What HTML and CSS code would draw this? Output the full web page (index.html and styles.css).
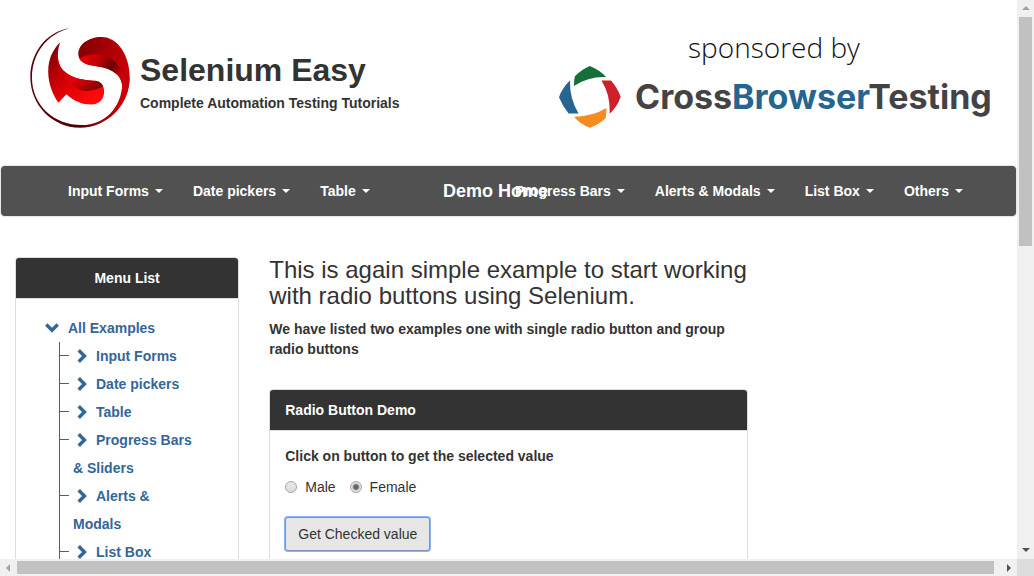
FILE: index.html
```html
<!DOCTYPE html>
<html lang="en">
<head>
<meta charset="utf-8">
<title>Selenium Easy - Radio Button Demo</title>
<link rel="stylesheet" href="styles.css">
</head>
<body>
<div class="viewport">
  <div class="page">
    <header class="site-header">
      <a class="brand" href="#">
        <svg class="brand-logo" viewBox="14 24 302 302" aria-hidden="true">
          <defs>
            <linearGradient id="ring" x1="0" y1="0" x2="1" y2="0">
              <stop offset="0" stop-color="#5a0508"/>
              <stop offset=".45" stop-color="#4a0003"/>
              <stop offset=".75" stop-color="#a00005"/>
              <stop offset="1" stop-color="#d00006"/>
            </linearGradient>
            <linearGradient id="lobe" x1="0" y1="0" x2="1" y2=".5">
              <stop offset="0" stop-color="#7a0003"/>
              <stop offset=".5" stop-color="#a80004"/>
              <stop offset="1" stop-color="#cc0006"/>
            </linearGradient>
            <linearGradient id="fold" x1="0" y1="0" x2="1" y2=".5">
              <stop offset="0" stop-color="#f00008"/>
              <stop offset=".4" stop-color="#c40005"/>
              <stop offset=".75" stop-color="#6c0003"/>
              <stop offset="1" stop-color="#c80006"/>
            </linearGradient>
            <linearGradient id="tail" x1="0" y1="0" x2=".7" y2="1">
              <stop offset="0" stop-color="#6c0003"/>
              <stop offset=".6" stop-color="#d80006"/>
              <stop offset="1" stop-color="#ff0a0a"/>
            </linearGradient>
            <linearGradient id="under" x1="0" y1="0" x2="1" y2="1">
              <stop offset="0" stop-color="#a00004"/>
              <stop offset=".55" stop-color="#e40007"/>
              <stop offset="1" stop-color="#6c0003"/>
            </linearGradient>
          </defs>
          <path fill="url(#ring)" d="M134 25C65 34 15 98 15 172c0 85 67 153 150 153s150-68 150-153l-22 20c-3 72-53 125-122 125C84 317 20 255 20 174 20 101 66 42 134 25z"/>
          <path fill="url(#lobe)" d="M160 105c-2-29 28-54 70-54 50 0 85 57 85 121 0 44-18 84-48 109 16-24 27-54 26-80-1-40-35-55-82-62-34-5-49-15-51-34z"/>
          <path fill="url(#fold)" d="M163 116c23-13 57-17 88-3 31 14 48 42 42 88-4-40-37-55-82-62-28-4-42-11-48-23z"/>
          <path fill="url(#tail)" d="M105 67c-20 20-36 48-36 88 0 38 14 70 31 95l24-26c24 22 48 31 75 31 25 0 39-17 39-40 0-20-12-31-32-32-48-2-96-17-106-58-4-18-2-38 5-58z"/>
          <path fill="url(#under)" d="M93 91c-4 42 13 80 51 108 29 22 56 18 91 2-4-12-14-18-29-18-48-2-96-17-106-58-2-10-3-20-1-32z"/>
        </svg>
        <span class="brand-text">
          <span class="brand-name">Selenium Easy</span>
          <span class="brand-tag">Complete Automation Testing Tutorials</span>
        </span>
      </a>
      <a class="sponsor" href="#">
        <span class="sponsor-by">sponsored by</span>
        <span class="sponsor-row">
          <svg class="sponsor-logo" viewBox="27 18 187 187" aria-hidden="true">
            <path fill="#166f3a" d="M72 78q0-18 3-29 19-20 45-31 28 11 49 33-53-2-97 27z"/>
            <path fill="#cd202c" d="M155 62h29q19 22 29 49-10 30-33 51 2-58-25-100z"/>
            <path fill="#f68b1f" d="M72 171q53 1 98-26 0 17-2 30-20 20-48 29-27-9-48-33z"/>
            <path fill="#266590" d="M60 62q-1 56 26 99H56q-18-22-29-49 10-28 33-50z"/>
          </svg>
          <span class="sponsor-name">Cross<b>Browser</b>Testing</span>
        </span>
      </a>
    </header>

    <nav class="navbar">
      <a class="navbar-home" href="#">Demo Home</a>
      <ul class="nav-list">
        <li><a href="#">Input Forms <i class="caret"></i></a></li>
        <li><a href="#">Date pickers <i class="caret"></i></a></li>
        <li><a href="#">Table <i class="caret"></i></a></li>
      </ul>
      <ul class="nav-list nav-right">
        <li><a href="#">Progress Bars <i class="caret"></i></a></li>
        <li><a href="#">Alerts &amp; Modals <i class="caret"></i></a></li>
        <li><a href="#">List Box <i class="caret"></i></a></li>
        <li><a href="#">Others <i class="caret"></i></a></li>
      </ul>
    </nav>

    <div class="columns">
      <aside class="panel side-panel">
        <h2 class="panel-heading menu-heading">Menu List</h2>
        <div class="tree">
          <a class="tree-root" href="#"><svg class="chevron" viewBox="0 0 14 14" aria-hidden="true"><path d="M2 4l5 5 5-5"/></svg>All Examples</a>
          <ul class="tree-list">
            <li><a href="#"><svg class="chevron" viewBox="0 0 14 14" aria-hidden="true"><path d="M5 2l5 5-5 5"/></svg>Input Forms</a></li>
            <li><a href="#"><svg class="chevron" viewBox="0 0 14 14" aria-hidden="true"><path d="M5 2l5 5-5 5"/></svg>Date pickers</a></li>
            <li><a href="#"><svg class="chevron" viewBox="0 0 14 14" aria-hidden="true"><path d="M5 2l5 5-5 5"/></svg>Table</a></li>
            <li><a href="#"><svg class="chevron" viewBox="0 0 14 14" aria-hidden="true"><path d="M5 2l5 5-5 5"/></svg>Progress Bars &amp; Sliders</a></li>
            <li><a href="#"><svg class="chevron" viewBox="0 0 14 14" aria-hidden="true"><path d="M5 2l5 5-5 5"/></svg>Alerts &amp; Modals</a></li>
            <li><a href="#"><svg class="chevron" viewBox="0 0 14 14" aria-hidden="true"><path d="M5 2l5 5-5 5"/></svg>List Box</a></li>
          </ul>
        </div>
      </aside>

      <main class="main">
        <h1 class="intro-title">This is again simple example to start working with radio buttons using Selenium.</h1>
        <p class="intro-text">We have listed two examples one with single radio button and group radio buttons</p>
        <section class="panel">
          <h2 class="panel-heading">Radio Button Demo</h2>
          <form class="panel-body">
            <p class="form-title">Click on button to get the selected value</p>
            <div class="radios">
              <label class="radio"><input type="radio" name="gender">Male</label>
              <label class="radio"><input type="radio" name="gender" checked>Female</label>
            </div>
            <button class="btn" type="button">Get Checked value</button>
          </form>
        </section>
      </main>
    </div>
  </div>

  <div class="bar bar-v" aria-hidden="true">
    <i class="arrow arrow-up"></i>
    <span class="track"><i class="thumb"></i></span>
    <i class="arrow arrow-down"></i>
  </div>
  <div class="bar bar-h" aria-hidden="true">
    <i class="arrow arrow-left"></i>
    <span class="track"><i class="thumb"></i></span>
    <i class="arrow arrow-right"></i>
  </div>
  <div class="bar-corner"></div>
</div>
</body>
</html>
```
FILE: styles.css
```css
* { box-sizing: border-box; }

body {
  margin: 0;
  background: #fff;
  color: #333;
  font: 14px/20px "Liberation Sans", Arial, sans-serif;
}

h1, h2, p, ul { margin: 0; padding: 0; }
ul { list-style: none; }
a { color: inherit; text-decoration: none; }

.viewport {
  display: grid;
  grid-template: minmax(0, 1fr) 17px / minmax(0, 1fr) 17px;
  height: 100vh;
}

.page { overflow: hidden; }

/* Header */
.site-header {
  display: flex;
  justify-content: space-between;
  padding: 28px 28px 37px 30px;
}

.brand {
  display: flex;
  gap: 10px;
}

.brand-logo {
  width: 100px;
  height: 100px;
}

.brand-text {
  display: flex;
  flex-direction: column;
  padding-top: 24px;
  font-weight: bold;
}

.brand-name {
  font-size: 32px;
  line-height: 36px;
}

.brand-tag { padding-top: 5px; }

.sponsor {
  display: flex;
  flex-direction: column;
  width: 430px;
}

.sponsor-by {
  color: #111;
  font: 300 28px/38px "Open Sans", sans-serif;
  text-align: center;
}

.sponsor-row {
  display: flex;
  align-items: center;
  gap: 14px;
}

.sponsor-logo {
  flex: none;
  width: 62px;
  height: 62px;
}

.sponsor-name {
  color: #434345;
  font: 700 34px/44px Inter, sans-serif;
  white-space: nowrap;
}

.sponsor-name b {
  color: #266590;
  font-weight: inherit;
}

/* Navigation */
.navbar {
  position: relative;
  display: flex;
  justify-content: space-between;
  padding: 0 38px 0 52px;
  border: 1px solid #e7e7e7;
  border-radius: 4px;
  background: #515151;
  background-clip: padding-box;
  color: #fff;
  font-weight: bold;
}

.navbar-home {
  position: absolute;
  left: 442px;
  top: 15px;
  font-size: 18px;
}

.nav-list { display: flex; }

.nav-list a {
  display: flex;
  align-items: center;
  gap: 6px;
  padding: 15px;
  white-space: nowrap;
}

.caret {
  border: 4px solid transparent;
  border-top-color: currentColor;
  border-bottom: 0;
}

/* Columns */
.columns {
  display: grid;
  grid-template-columns: 1fr 2fr 1fr;
  margin-top: 40px;
}

.panel {
  border: 1px solid #ddd;
  border-radius: 4px;
}

.side-panel { margin: 0 15px; }

.panel-heading {
  padding: 10px 15px;
  border-bottom: 1px solid #ddd;
  border-radius: 3px 3px 0 0;
  background: #333;
  background-clip: padding-box;
  color: #fff;
  font-size: 14px;
  line-height: 20px;
}

.menu-heading { text-align: center; }

/* Menu tree */
.tree {
  padding: 15px 43px 15px 28px;
  color: #369;
  font-weight: bold;
  line-height: 28px;
}

.tree-root { display: block; }

.chevron {
  width: 16px;
  height: 16px;
  margin-right: 8px;
  vertical-align: -3px;
  fill: none;
  stroke: currentColor;
  stroke-width: 3;
}

.tree-list {
  margin-left: 15px;
  border-left: 1px solid #369;
}

.tree-list li {
  position: relative;
  padding-left: 13px;
}

.tree-list .chevron { margin-right: 7px; }

.tree-list li::before {
  content: "";
  position: absolute;
  left: 0;
  top: 13px;
  width: 9px;
  border-top: 1px solid #369;
}

/* Main column */
.main { padding: 0 15px; }

.intro-title {
  font-size: 24px;
  font-weight: normal;
  line-height: 26px;
}

.intro-text {
  margin: 10px 0 30px;
  font-weight: bold;
}

.panel-body { padding: 15px; }
.form-title { font-weight: bold; }

.radios {
  display: flex;
  gap: 14px;
  margin: 11px 0 20px;
}

.radio {
  display: flex;
  align-items: center;
  gap: 8px;
}

.radio input {
  appearance: none;
  width: 12px;
  height: 12px;
  margin: 0;
  border: 1px solid #a5a5a5;
  border-radius: 50%;
  background: linear-gradient(#e8e8e8, #dcdcdc);
}

.radio input:checked {
  background: radial-gradient(circle, #666 2px, #e4e4e4 4px);
}

.btn {
  padding: 6px 12px;
  border: 1px solid #7d93bb;
  border-radius: 3px;
  box-shadow: 0 0 0 1px #8ab4f8;
  background: #e6e6e6;
  color: #333;
  font: inherit;
}

/* Scroll bars */
.bar {
  display: flex;
  align-items: center;
  background: #f0f0f0;
}

.bar-v { flex-direction: column; }
.track { flex: 1; display: flex; }
.thumb { background: #c1c1c1; }
.bar-v .thumb { width: 13px; height: 43.6%; }
.bar-h .thumb { width: 100%; height: 13px; }
.bar-h .track { margin-right: 6px; }
.bar-corner { background: #dcdcdc; }

.arrow {
  width: 0;
  height: 0;
  border: 4px solid transparent;
}

.arrow-up { margin: 6px 0 7px; border-top: 0; border-bottom-color: #a3a3a3; }
.arrow-down { margin: 6px 0 7px; border-bottom: 0; border-top-color: #505050; }
.arrow-left { margin: 0 7px 0 6px; border-left: 0; border-right-color: #a3a3a3; }
.arrow-right { margin: 0 6px 0 7px; border-right: 0; border-left-color: #505050; }
```
